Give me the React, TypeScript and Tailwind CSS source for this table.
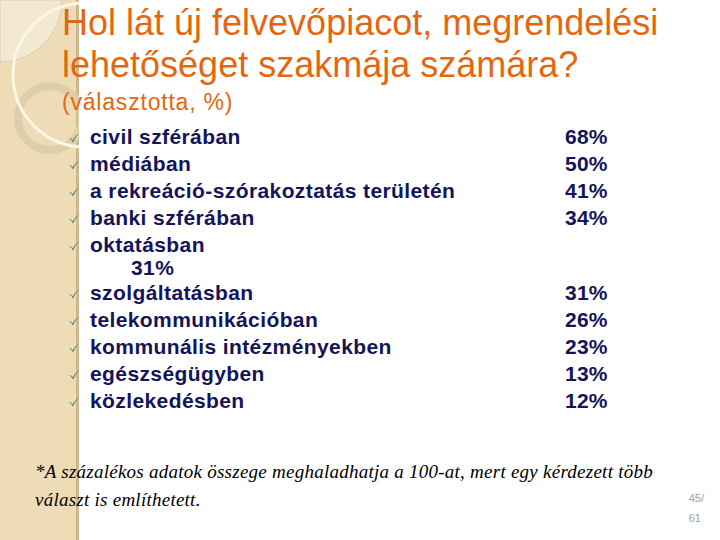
import React from 'react';

const items = [
  { label: 'civil szférában', pct: '68%' },
  { label: 'médiában', pct: '50%' },
  { label: 'a rekreáció-szórakoztatás területén', pct: '41%' },
  { label: 'banki szférában', pct: '34%' },
  { label: 'oktatásban', pct: '', extra: '31%' },
  { label: 'szolgáltatásban', pct: '31%' },
  { label: 'telekommunikációban', pct: '26%' },
  { label: 'kommunális intézményekben', pct: '23%' },
  { label: 'egészségügyben', pct: '13%' },
  { label: 'közlekedésben', pct: '12%' },
];

const Check: React.FC = () => (
  <svg viewBox="0 0 12 11" className="h-[11px] w-[12px]">
    <path d="M0.5 6 Q2.3 6.2 3.8 8.4 L4.9 10.6 Q7.4 4.6 11.8 0.4 Q7.8 3 4.7 8.2 Q3 5.6 0.5 6 Z" fill="#4a8584" />
  </svg>
);

const App: React.FC = () => {
  return (
    <div className="relative w-[720px] h-[540px] overflow-hidden bg-[linear-gradient(to_right,#eddcb6_0px,#eddcb6_76px,#cdb98f_76px,#cdb98f_79px,#ffffff_79px)]">
      {/* decorative circles on the beige strip */}
      <svg className="absolute left-0 top-0" width="79" height="170" viewBox="0 0 79 170">
        <path d="M0 0 H62 A62 62 0 0 1 0 62 Z" fill="#f3e9d2" stroke="#d6c7a5" strokeWidth="0.8" />
        <circle cx="50" cy="118" r="32" fill="none" stroke="#ddcfaa" strokeWidth="8" />
        <circle cx="85" cy="75" r="72" fill="none" stroke="#fcf6e6" strokeWidth="3" />
      </svg>

      <div className="relative flex flex-col h-full" style={{ fontFamily: '"Liberation Sans", Arial, sans-serif' }}>
        <h1 className="pl-[62px] pt-[2px] text-[36px] leading-[42px] text-[#e4670f] font-normal">
          Hol lát új felvevőpiacot, megrendelési
          <br />
          lehetőséget szakmája számára?
        </h1>
        <p className="pl-[62px] mt-[3px] text-[23px] leading-[26px] tracking-[0.8px] text-[#e4670f]">(választotta, %)</p>

        <ul className="mt-[10px] flex flex-col gap-[3px]">
          {items.map((it) => (
            <li key={it.label} className="flex items-start pl-[68px] text-[21px] leading-[24px] font-bold text-[#14145a]">
              <span className="w-[22px] pt-[7px]">
                <Check />
              </span>
              <span className="w-[475px] tracking-[0.4px]">
                {it.label}
                {it.extra && <span className="block pl-[41px] leading-[21px]">{it.extra}</span>}
              </span>
              <span className="tracking-[0.2px]">{it.pct}</span>
            </li>
          ))}
        </ul>

        <p
          className="mt-auto mb-[26px] pl-[35px] italic text-[19px] leading-[28px] tracking-[0.25px] text-black whitespace-nowrap"
          style={{ fontFamily: '"Liberation Serif", Georgia, serif' }}
        >
          *A százalékos adatok összege meghaladhatja a 100-at, mert egy kérdezett több
          <br />
          választ is említhetett.
        </p>
      </div>

      <div className="absolute right-[16px] bottom-[12px] text-[11px] leading-[20px] text-[#a0a0a0] text-left" style={{ fontFamily: '"Liberation Sans", Arial, sans-serif' }}>
        45/
        <br />
        61
      </div>
    </div>
  );
};

export default App;
